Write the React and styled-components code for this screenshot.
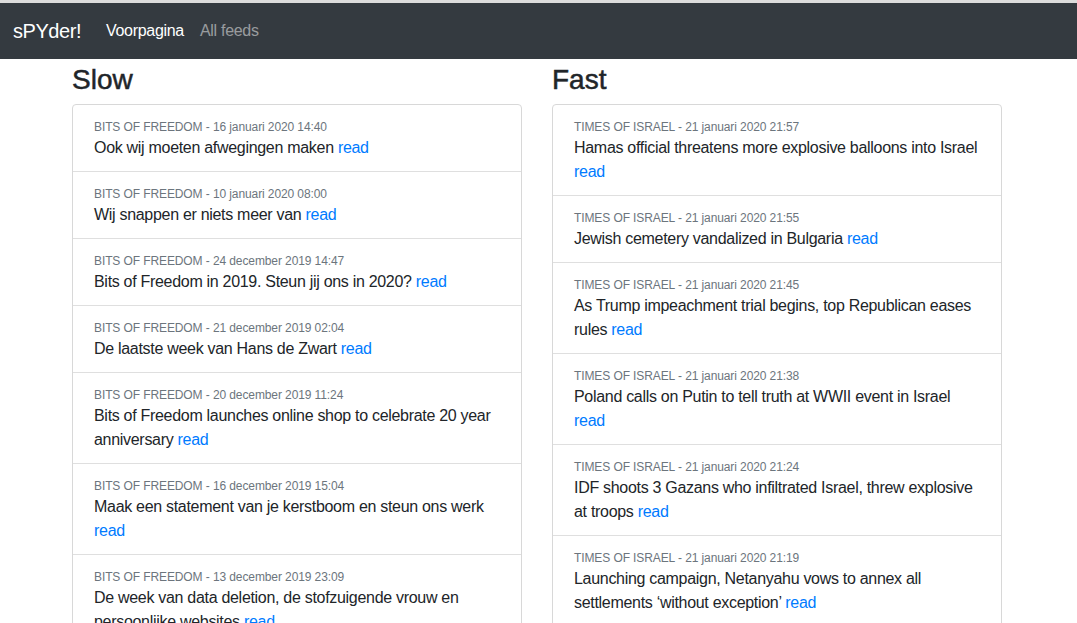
import styled, { createGlobalStyle } from "styled-components";

const GlobalStyle = createGlobalStyle`
  html, body {
    margin: 0;
    padding: 0;
    overflow: hidden;
    background: #fff;
  }
  body {
    font-family: "Liberation Sans", Arial, sans-serif;
    font-size: 16px;
    line-height: 1.5;
    color: #212529;
    border-top: 3px solid #dcdcdc;
  }
`;

const Navbar = styled.nav`
  display: flex;
  align-items: center;
  height: 56px;
  padding: 0 16px 0 13px;
  background: #343a40;
  box-sizing: border-box;
`;

const Brand = styled.a`
  font-size: 20px;
  line-height: 30px;
  letter-spacing: -0.45px;
  color: #fff;
  text-decoration: none;
  margin-right: 17px;
`;

const NavLink = styled.a`
  padding: 8px;
  font-size: 16px;
  line-height: 24px;
  letter-spacing: -0.3px;
  text-decoration: none;
  color: ${(p) => (p.active ? "#fff" : "rgba(255, 255, 255, 0.5)")};
`;

const Main = styled.div`
  display: grid;
  grid-template-columns: 450px 450px;
  column-gap: 30px;
  padding: 4px 0 0 72px;
`;

const Column = styled.div`
  display: flex;
  flex-direction: column;
`;

const Heading = styled.h3`
  margin: 0 0 7px;
  font-size: 28px;
  font-weight: 500;
  line-height: 1.2;
  -webkit-text-stroke: 0.5px #212529;
`;

const Card = styled.ul`
  margin: 0;
  padding: 0;
  list-style: none;
  border: 1px solid #d8d8d8;
  border-radius: 4px;
`;

const Item = styled.li`
  padding: 13px 20px 11px 21px;
  border-top: ${(p) => (p.first ? "none" : "1px solid #dfdfdf")};
`;

const Meta = styled.small`
  display: block;
  font-size: 12px;
  line-height: 18px;
  letter-spacing: -0.1px;
  color: #6c757d;
`;

const Title = styled.div`
  font-size: 16px;
  line-height: 24px;
  letter-spacing: -0.3px;
  color: #212529;
  a {
    color: #007bff;
    text-decoration: none;
  }
`;

const slow = [
  ["16 januari 2020 14:40", "Ook wij moeten afwegingen maken"],
  ["10 januari 2020 08:00", "Wij snappen er niets meer van"],
  ["24 december 2019 14:47", "Bits of Freedom in 2019. Steun jij ons in 2020?"],
  ["21 december 2019 02:04", "De laatste week van Hans de Zwart"],
  ["20 december 2019 11:24", "Bits of Freedom launches online shop to celebrate 20 year anniversary"],
  ["16 december 2019 15:04", "Maak een statement van je kerstboom en steun ons werk"],
  ["13 december 2019 23:09", "De week van data deletion, de stofzuigende vrouw en persoonlijke websites"],
];

const fast = [
  ["21 januari 2020 21:57", "Hamas official threatens more explosive balloons into Israel"],
  ["21 januari 2020 21:55", "Jewish cemetery vandalized in Bulgaria"],
  ["21 januari 2020 21:45", "As Trump impeachment trial begins, top Republican eases rules"],
  ["21 januari 2020 21:38", "Poland calls on Putin to tell truth at WWII event in Israel"],
  ["21 januari 2020 21:24", "IDF shoots 3 Gazans who infiltrated Israel, threw explosive at troops"],
  ["21 januari 2020 21:19", "Launching campaign, Netanyahu vows to annex all settlements \u2018without exception\u2019"],
];

const Feed = ({ title, source, items }) => (
  <Column>
    <Heading>{title}</Heading>
    <Card>
      {items.map(([date, text], i) => (
        <Item key={i} first={i === 0}>
          <Meta>
            {source} - {date}
          </Meta>
          <Title>
            {text} <a href="#">read</a>
          </Title>
        </Item>
      ))}
    </Card>
  </Column>
);

export default function App() {
  return (
    <>
      <GlobalStyle />
      <Navbar>
        <Brand href="#">sPYder!</Brand>
        <NavLink href="#" active>
          Voorpagina
        </NavLink>
        <NavLink href="#">All feeds</NavLink>
      </Navbar>
      <Main>
        <Feed title="Slow" source="BITS OF FREEDOM" items={slow} />
        <Feed title="Fast" source="TIMES OF ISRAEL" items={fast} />
      </Main>
    </>
  );
}
